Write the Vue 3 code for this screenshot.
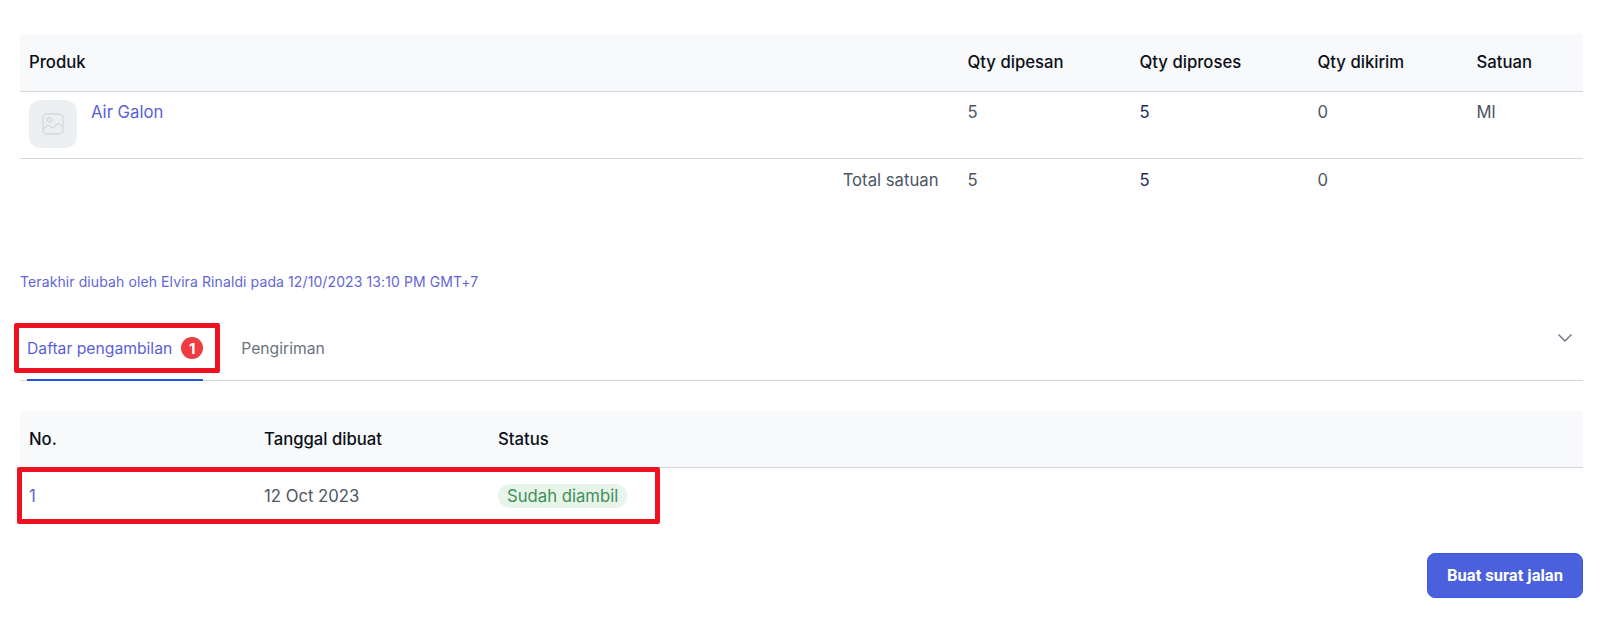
<template>
  <div class="page">
    <div class="grid products head head-tall">
      <div>Produk</div>
      <div>Qty dipesan</div>
      <div>Qty diproses</div>
      <div>Qty dikirim</div>
      <div>Satuan</div>
    </div>
    <div class="grid products row">
      <div class="product">
        <div class="thumb">
          <svg width="22" height="24" viewBox="0 0 22 24" fill="none" stroke="#d5d8dc" stroke-width="1.3">
            <rect x="1" y="2" width="20" height="20" rx="4" />
            <circle cx="7.5" cy="8" r="2.2" />
            <path d="M1 17l5-3.5 5 2.5 5-4.5 5 3" />
          </svg>
        </div>
        <a class="link">Air Galon</a>
      </div>
      <div>5</div>
      <div class="dark">5</div>
      <div>0</div>
      <div>Ml</div>
    </div>
    <div class="grid products total">
      <div class="total-label">Total satuan</div>
      <div>5</div>
      <div class="dark">5</div>
      <div>0</div>
      <div></div>
    </div>

    <p class="modified">Terakhir diubah oleh Elvira Rinaldi pada 12/10/2023 13:10 PM GMT+7</p>

    <div class="tabs">
      <div class="tab active">
        Daftar pengambilan
        <span class="badge">1</span>
      </div>
      <div class="tab">Pengiriman</div>
      <svg class="chevron" width="16" height="10" viewBox="0 0 16 10" fill="none" stroke="#6b7280" stroke-width="1.4">
        <path d="M1.5 1.5L8 8l6.5-6.5" />
      </svg>
      <div class="mark mark-tab"></div>
    </div>

    <div class="pickups">
      <div class="grid list head">
        <div>No.</div>
        <div>Tanggal dibuat</div>
        <div>Status</div>
      </div>
      <div class="grid list row-list">
        <a class="link">1</a>
        <div>12 Oct 2023</div>
        <div><span class="pill">Sudah diambil</span></div>
      </div>
      <div class="mark mark-row"></div>
    </div>

    <div class="actions">
      <button class="primary">Buat surat jalan</button>
    </div>
  </div>
</template>

<script setup>
</script>

<style>
html, body {
  background: #fff;
}
</style>

<style scoped>
* {
  box-sizing: border-box;
}

.page {
  padding: 34px 17px 0 20px;
  font-family: Inter, "Liberation Sans", sans-serif;
  font-size: 16.7px;
  color: #4b5563;
}

.grid {
  display: grid;
  padding-left: 9px;
}

.products {
  grid-template-columns: 938.5px 172px 178px 159px 106.5px;
}

.list {
  grid-template-columns: 235px 234px 1fr;
}

.head {
  height: 57px;
  padding-bottom: 1px;
  align-items: center;
  background: #f8f9fb;
  border-bottom: 1px solid #d1d5de;
  font-weight: 500;
  color: #0b0f19;
}

.head-tall {
  height: 58px;
}

.row {
  height: 67px;
  padding-top: 10px;
  border-bottom: 1px solid #d1d5de;
}

.product {
  display: flex;
  gap: 14px;
}

.thumb {
  width: 48px;
  height: 48px;
  border-radius: 12px;
  background: #eceff2;
  display: flex;
  align-items: center;
  justify-content: center;
  margin-top: -2px;
}

.link {
  color: #5b5fd6;
  line-height: 20px;
}

.dark {
  color: #1f2a5a;
}

.total {
  height: 42px;
  align-items: center;
}

.total-label {
  text-align: right;
  padding-right: 29px;
}

.modified {
  margin: 72px 0 0;
  font-size: 14px;
  letter-spacing: 0.1px;
  line-height: 18px;
  color: #6366d8;
}

.tabs {
  position: relative;
  display: flex;
  margin-top: 30px;
  height: 60px;
  border-bottom: 1px solid #d1d5db;
  padding-left: 7px;
  gap: 38px;
}

.tab {
  display: flex;
  align-items: center;
  gap: 9px;
  height: 60px;
  padding-bottom: 6px;
  font-size: 15.7px;
  color: #6b7280;
}

.tab.active {
  padding-bottom: 4px;
  color: #5b5fd6;
  border-bottom: 2px solid #2450e0;
}

.badge {
  width: 22px;
  height: 22px;
  border-radius: 50%;
  background: #ef3b42;
  color: #fff;
  font-size: 15px;
  font-weight: 700;
  display: flex;
  align-items: center;
  justify-content: center;
}

.chevron {
  margin-left: auto;
  margin-top: 12px;
  margin-right: 10px;
}

.pickups {
  position: relative;
  margin-top: 30px;
}

.row-list {
  height: 55px;
  align-items: center;
}

.pill {
  display: inline-block;
  padding: 2px 9px;
  border-radius: 12px;
  background: #e7f4ea;
  color: #3f8f57;
  line-height: 20px;
}

.mark {
  position: absolute;
  border: 5px solid #ee1122;
  border-radius: 2px;
  pointer-events: none;
}

.mark-tab {
  left: -6px;
  top: 2px;
  width: 206px;
  height: 50px;
}

.mark-row {
  left: -3px;
  top: 56px;
  width: 643px;
  height: 57px;
}

.actions {
  display: flex;
  justify-content: flex-end;
  margin-top: 30px;
}

.primary {
  width: 156px;
  height: 45px;
  border: 1px solid #3f57e0;
  border-radius: 8px;
  background: #4b60dd;
  color: #fff;
  font-family: Roboto, Inter, sans-serif;
  font-size: 16.5px;
  font-weight: 700;
}
</style>
